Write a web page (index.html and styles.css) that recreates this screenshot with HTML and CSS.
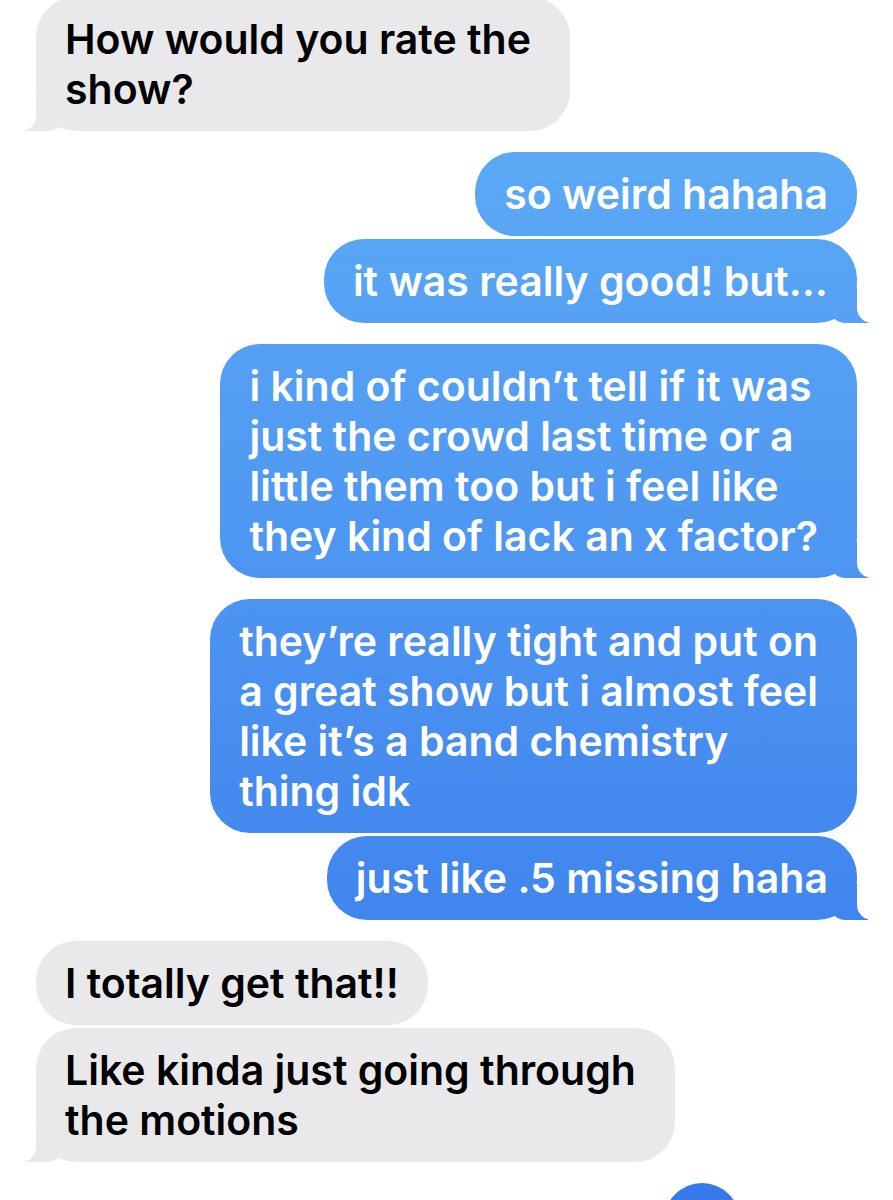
FILE: index.html
```html
<!DOCTYPE html>
<html lang="en">
<head>
  <meta charset="UTF-8" />
  <meta name="viewport" content="width=device-width, initial-scale=1.0" />
  <title>Messages</title>
  <link rel="stylesheet" href="styles.css">
</head>
<body>
  <main class="thread">
    <div class="bubble in tail multi">How would you rate the<br>show?</div>

    <div class="bubble out group">so weird hahaha</div>
    <div class="bubble out tail">it was really good! but…</div>

    <div class="bubble out tail group multi">i kind of couldn’t tell if it was<br>just the crowd last time or a<br>little them too but i feel like<br>they kind of lack an x factor?</div>

    <div class="bubble out group multi">they’re really tight and put on<br>a great show but i almost feel<br>like it’s a band chemistry<br>thing idk</div>
    <div class="bubble out tail">just like .5 missing haha</div>

    <div class="bubble in group">I totally get that!!</div>
    <div class="bubble in tail multi">Like kinda just going through<br>the motions</div>

    <div class="bubble out group peek">&nbsp;</div>
  </main>
</body>
</html>
```

FILE: styles.css
```css
* {
  margin: 0;
  padding: 0;
  box-sizing: border-box;
}

html,
body {
  height: 1200px;
  overflow: hidden;
}

body {
  background: #fff;
  font-family: 'Inter', 'Noto Sans', sans-serif;
}

.thread {
  display: flex;
  flex-direction: column;
  height: 1200px;
  overflow: hidden;
  padding: 0 36px;
}

.bubble {
  position: relative;
  flex-shrink: 0;
  margin-top: 3px;
  padding: 17px 29px;
  border-radius: 40px;
  font-size: 41px;
  line-height: 50px;
  font-weight: 600;
  white-space: nowrap;
}

.bubble:first-child {
  margin-top: -3px;
}

.bubble.multi {
  padding-right: 39px;
}

.bubble.group {
  margin-top: 21px;
}

.in {
  align-self: flex-start;
  background: #e9e9eb;
  color: #000;
}

.out {
  align-self: flex-end;
  color: #fff;
  background: linear-gradient(#61b0f7, #3778eb) fixed;
}

/* tails */
.tail::before,
.tail::after {
  content: "";
  position: absolute;
  bottom: 0;
  z-index: -1;
  height: 36px;
}

.out.tail::before {
  right: -11px;
  width: 40px;
  background: linear-gradient(#61b0f7, #3778eb) fixed;
  border-bottom-left-radius: 18px;
}

.out.tail::after {
  right: -15px;
  width: 15px;
  background: #fff;
  border-bottom-left-radius: 15px;
}

.in.tail::before {
  left: -11px;
  width: 40px;
  background: #e9e9eb;
  border-bottom-right-radius: 18px;
}

.in.tail::after {
  left: -15px;
  width: 15px;
  background: #fff;
  border-bottom-right-radius: 15px;
}

.peek {
  align-self: flex-start;
  margin-left: 628px;
  margin-top: 23px;
  width: 76px;
  padding: 17px 0;
}
```
